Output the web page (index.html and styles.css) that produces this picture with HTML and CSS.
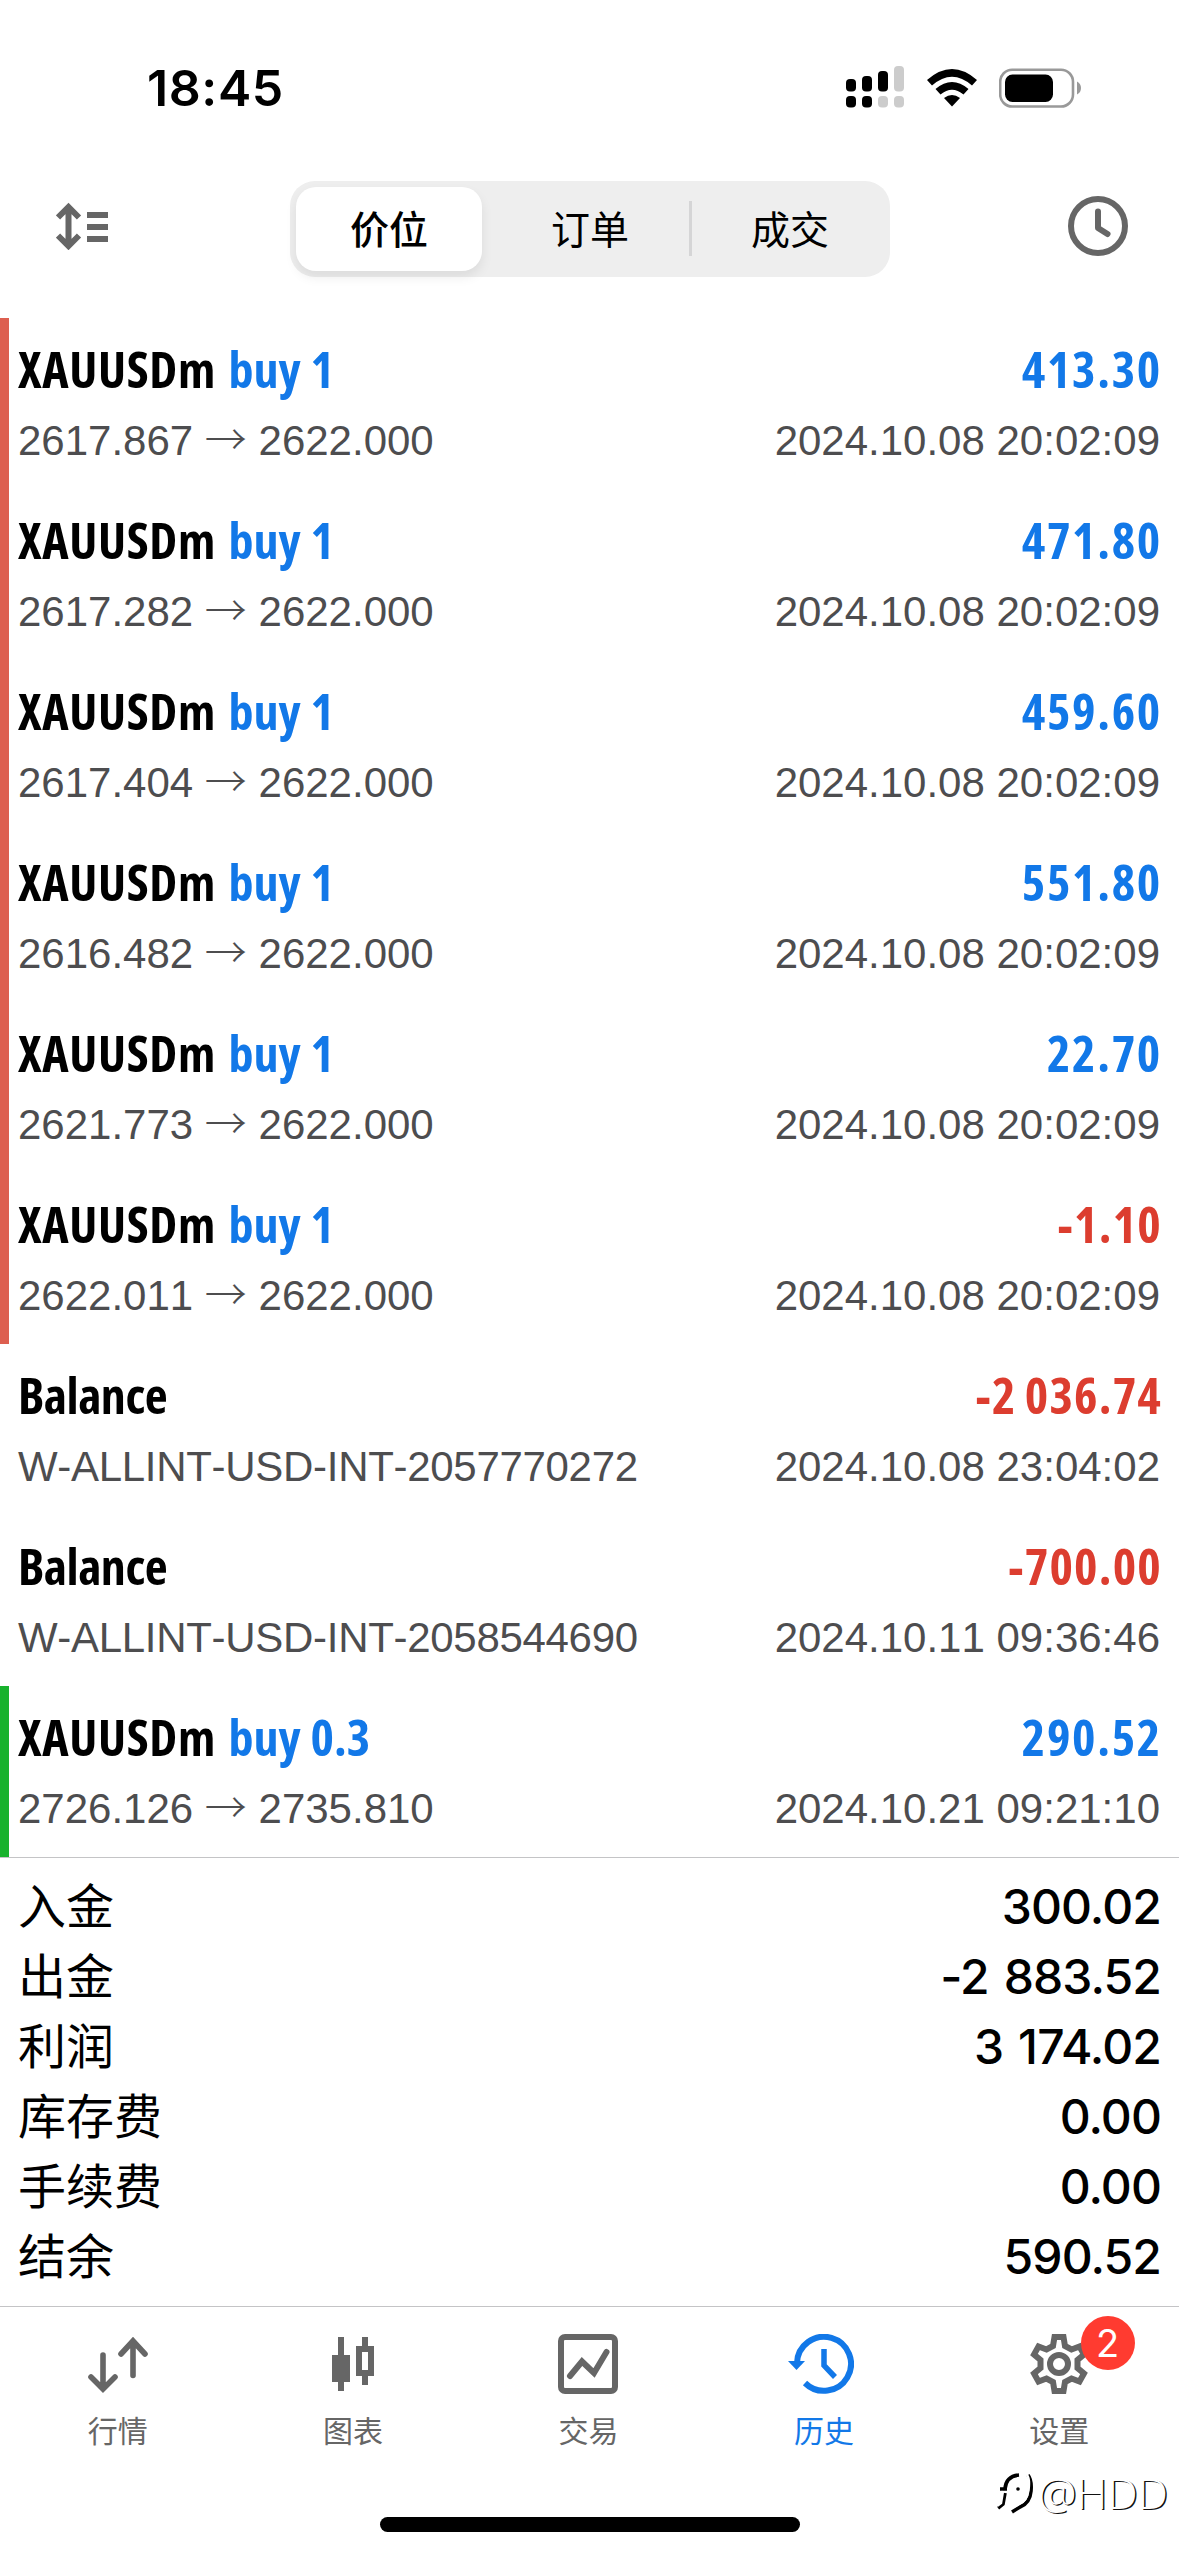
FILE: index.html
```html
<!DOCTYPE html>
<html lang="zh-CN">
<head>
<meta charset="utf-8">
<title>历史</title>
<link rel="stylesheet" href="styles.css">
</head>
<body>
<div class="screen">
  <header class="status">
    <span class="time">18:45</span>
    <svg class="signal" width="58" height="42" viewBox="0 0 58 42">
      <rect x="0" y="13" width="10" height="12.500" rx="4"/><rect x="16" y="10" width="10" height="15.500" rx="4"/><rect x="32" y="5" width="10" height="20.500" rx="4"/><rect class="off" x="48" y="0" width="10" height="25.500" rx="4"/>
      <rect x="0" y="30" width="10" height="11.500" rx="4"/><rect x="16" y="30" width="10" height="11.500" rx="4"/><rect class="off" x="32" y="30" width="10" height="11.500" rx="4"/><rect class="off" x="48" y="30" width="10" height="11.500" rx="4"/>
    </svg>
    <svg class="wifi" width="50" height="38" viewBox="0 0 50 38">
      <path d="M0 11Q25-11 50 11L45 16.500Q25-1 5 16.500Z"/>
      <path d="M8.500 20Q25 6 41.500 20L36.500 25.500Q25 16 13.500 25.500Z"/>
      <path d="M17 29Q25 23 33 29L25 37.500Z"/>
    </svg>
    <svg class="battery" width="83" height="40" viewBox="0 0 83 40">
      <rect x="1.200" y="1.700" width="72.800" height="36.800" rx="12" fill="none" stroke="#999" stroke-width="2.600"/>
      <rect x="6" y="6.500" width="48" height="27.500" rx="7.500"/>
      <path d="M78 13.500Q82 15.500 82 20T78 26.500Z" fill="#999"/>
    </svg>
  </header>

  <nav class="toolbar">
    <svg class="sort" width="52" height="48" viewBox="0 0 52 48">
      <path d="M12.500 5V44M2 15.500L12.500 5L23 15.500M2 33.500L12.500 44L23 33.500M31 13H52M31 25H52M31 37H52" fill="none" stroke="#666" stroke-width="6"/>
    </svg>
    <div class="segments">
      <span class="segment active">价位</span>
      <span class="segment">订单</span>
      <span class="segment divided">成交</span>
    </div>
    <svg class="clock" width="60" height="60" viewBox="0 0 60 60" fill="none" stroke="#666" stroke-width="6">
      <circle cx="30" cy="30" r="27"/><path d="M30 15.500V32L39.500 38" stroke-linecap="round" stroke-linejoin="round"/>
    </svg>
  </nav>

  <main class="deals">
    <article class="deal loss"><h2><span class="name">XAUUSDm</span><span class="side">buy 1</span></h2><b class="amount">413.30</b><p>2617.867 <i>→</i> 2622.000</p><time>2024.10.08 20:02:09</time></article>
    <article class="deal loss"><h2><span class="name">XAUUSDm</span><span class="side">buy 1</span></h2><b class="amount">471.80</b><p>2617.282 <i>→</i> 2622.000</p><time>2024.10.08 20:02:09</time></article>
    <article class="deal loss"><h2><span class="name">XAUUSDm</span><span class="side">buy 1</span></h2><b class="amount">459.60</b><p>2617.404 <i>→</i> 2622.000</p><time>2024.10.08 20:02:09</time></article>
    <article class="deal loss"><h2><span class="name">XAUUSDm</span><span class="side">buy 1</span></h2><b class="amount">551.80</b><p>2616.482 <i>→</i> 2622.000</p><time>2024.10.08 20:02:09</time></article>
    <article class="deal loss"><h2><span class="name">XAUUSDm</span><span class="side">buy 1</span></h2><b class="amount">22.70</b><p>2621.773 <i>→</i> 2622.000</p><time>2024.10.08 20:02:09</time></article>
    <article class="deal loss"><h2><span class="name">XAUUSDm</span><span class="side">buy 1</span></h2><b class="amount negative">-1.10</b><p>2622.011 <i>→</i> 2622.000</p><time>2024.10.08 20:02:09</time></article>
    <article class="deal"><h2><span class="operation">Balance</span></h2><b class="amount negative">-2 036.74</b><p class="reference">W-ALLINT-USD-INT-2057770272</p><time>2024.10.08 23:04:02</time></article>
    <article class="deal"><h2><span class="operation">Balance</span></h2><b class="amount negative">-700.00</b><p class="reference">W-ALLINT-USD-INT-2058544690</p><time>2024.10.11 09:36:46</time></article>
    <article class="deal profit"><h2><span class="name">XAUUSDm</span><span class="side">buy 0.3</span></h2><b class="amount">290.52</b><p>2726.126 <i>→</i> 2735.810</p><time>2024.10.21 09:21:10</time></article>
  </main>

  <dl class="summary">
    <div><dt>入金</dt><dd>300.02</dd></div>
    <div><dt>出金</dt><dd>-2 883.52</dd></div>
    <div><dt>利润</dt><dd>3 174.02</dd></div>
    <div><dt>库存费</dt><dd>0.00</dd></div>
    <div><dt>手续费</dt><dd>0.00</dd></div>
    <div><dt>结余</dt><dd>590.52</dd></div>
  </dl>

  <nav class="tabs">
    <a class="tab">
      <svg width="60" height="60" viewBox="0 0 60 60"><path d="M15 21V54M3 43L15 55L27 43M45 41.500V8M33 20L45 7L57 20" fill="none" stroke="currentColor" stroke-width="5.600" stroke-linecap="round"/></svg>
      <span>行情</span>
    </a>
    <a class="tab">
      <svg width="60" height="60" viewBox="0 0 60 60"><path d="M15 3H21V21H27V48H21V57H15V48H9V21H15Z" fill="currentColor"/><path d="M39 3H45V12H51V42H45V51H39V42H33V12H39ZM39 18V36H45V18Z" fill="currentColor" fill-rule="evenodd"/></svg>
      <span>图表</span>
    </a>
    <a class="tab">
      <svg width="60" height="60" viewBox="0 0 60 60" fill="none" stroke="currentColor" stroke-width="6"><rect x="3" y="3" width="54" height="54" rx="4"/><path d="M12 42L24 27.500L36 39L48.500 18" stroke-linecap="round"/></svg>
      <span>交易</span>
    </a>
    <a class="tab current">
      <svg width="66" height="60" viewBox="0 0 66 60"><path d="M9 29A27 27 0 1 1 17 49" fill="none" stroke="currentColor" stroke-width="6"/><path d="M0 27H17L8.500 36Z" fill="currentColor"/><path d="M36 15V31.500L47 43" fill="none" stroke="currentColor" stroke-width="5.500"/></svg>
      <span>历史</span>
    </a>
    <a class="tab">
      <svg width="60" height="60" viewBox="0 0 60 60" fill="none" stroke="currentColor" stroke-width="6"><path d="M25.500 3H34.500L36 12L42.500 15.500L50.500 12.500L55 20.500L48.500 26V34L55 39.500L50.500 47.500L42.500 44.500L36 48L34.500 57H25.500L24 48L17.500 44.500L9.500 47.500L5 39.500L11.500 34V26L5 20.500L9.500 12.500L17.500 15.500L24 12Z"/><circle cx="30" cy="30" r="9"/></svg>
      <span>设置</span>
      <em class="badge">2</em>
    </a>
  </nav>

  <div class="home-indicator"></div>

  <div class="watermark">
    <svg width="44" height="46" viewBox="0 0 44 46" fill="none"><path d="M4 38L9 34L11 23M6 19H13M11 19Q12 6 25 5M34 5Q38 10 37 21Q36 33 26 37L18 42" stroke="#000" stroke-width="3.600"/><path d="M3 36L7 33L9 21M33 5Q36 9 34.500 20Q33 31 25 34L17 38" stroke="#fff" stroke-width="2.500"/><circle cx="24" cy="19" r="1.800" fill="#000"/></svg>
    <span>@HDD</span>
  </div>
</div>
</body>
</html>
```
FILE: styles.css
```css
* { box-sizing: border-box; margin: 0; padding: 0; }

body {
  background: #fff;
  color: #000;
  font-family: Inter, "Noto Sans CJK SC", sans-serif;
}

.screen {
  position: relative;
  display: flex;
  flex-direction: column;
  width: 1179px;
  height: 2556px;
  overflow: hidden;
}

.status {
  display: flex;
  align-items: center;
  height: 176px;
  padding: 0 97px 0 147px;
}
.time { flex: 1; font-size: 50px; font-weight: 600; letter-spacing: .6px; }
.signal { margin: -3px 23px 0 0; }
.signal .off { fill: #ccc; }
.wifi { margin-right: 22px; }

.toolbar {
  display: flex;
  align-items: center;
  justify-content: space-between;
  height: 142px;
  padding: 0 51px 42px 56px;
}
.toolbar .segments {
  display: grid;
  grid-template-columns: repeat(3, 1fr);
  align-items: center;
  width: 600px;
  height: 96px;
  margin: 5px 0 0 4px;
  padding: 6px;
  border-radius: 25px;
  background: #eee;
}
.segment {
  display: flex;
  align-items: center;
  justify-content: center;
  height: 55px;
  padding-bottom: 4px;
  font-size: 39px;
}
.segment.active {
  width: 186px;
  height: 84px;
  border-radius: 20px;
  background: #fff;
  font-weight: 500;
  box-shadow: 0 6px 12px rgba(0, 0, 0, .08);
}
.segment.divided { border-left: 3px solid #d5d5d6; margin-left: 1px; padding-left: 4px; }

.deal {
  display: grid;
  grid-template-columns: 1fr auto;
  grid-template-rows: 66px 50px;
  row-gap: 14px;
  height: 171px;
  padding: 18px 19px 0 18px;
  white-space: nowrap;
}
.loss { box-shadow: inset 9px 0 #dd5f50; }
.profit { box-shadow: inset 9px 0 #18b22d; }
.deal h2, .amount {
  font: 700 50px/66px "Open Sans", sans-serif;
  font-stretch: 76%;
}
.name { letter-spacing: .65px; }
.side { margin-left: 12.500px; color: #1278e8; word-spacing: 1px; }
.operation { letter-spacing: -.5px; }
.amount {
  justify-self: end;
  margin-right: -2px;
  color: #1278e8;
  letter-spacing: 1.700px;
}
.amount.negative { color: #dc3d2f; letter-spacing: 1.200px; word-spacing: -2px; }
.deal p, .deal time {
  color: #4d4d4f;
  font: 42px/50px "Liberation Sans", sans-serif;
  font-kerning: none;
}
.deal p.reference { letter-spacing: -.3px; }
.deal i { font: 300 42px/0 "Noto Sans CJK SC", sans-serif; }

.summary {
  height: 449px;
  padding: 14px 19px 0 18px;
  border-top: 1px solid #c4c4c6;
}
.summary div {
  display: flex;
  align-items: center;
  justify-content: space-between;
  height: 70px;
  font-size: 48px;
  line-height: 70px;
}
.summary dd { margin-right: -1px; font-weight: 500; letter-spacing: -.9px; word-spacing: 3px; }

.tabs {
  display: grid;
  grid-template-columns: repeat(5, 1fr);
  height: 212px;
  padding: 27px 2px 0 0;
  border-top: 1px solid #c4c4c6;
}
.tab {
  position: relative;
  display: flex;
  flex-direction: column;
  align-items: center;
  gap: 15px;
  color: #666;
  font-size: 30px;
  line-height: 44px;
}
.tab.current { color: #1278e8; }
.tab.current svg { margin-left: -6px; }
.badge {
  position: absolute;
  top: -18px;
  left: 139px;
  width: 54px;
  height: 54px;
  border-radius: 50%;
  background: #ff3b30;
  color: #fff;
  font: 38px/54px Inter, sans-serif;
  text-align: center;
}

.home-indicator {
  width: 420px;
  height: 15px;
  margin: -1px auto 0;
  border-radius: 8px;
  background: #000;
}

.watermark {
  position: absolute;
  right: 11px;
  bottom: 34px;
  display: flex;
  align-items: center;
  color: #fff;
  font: 300 43px/58px "Open Sans", sans-serif;
  text-shadow: 1.500px 1px 0 #111;
}
```
